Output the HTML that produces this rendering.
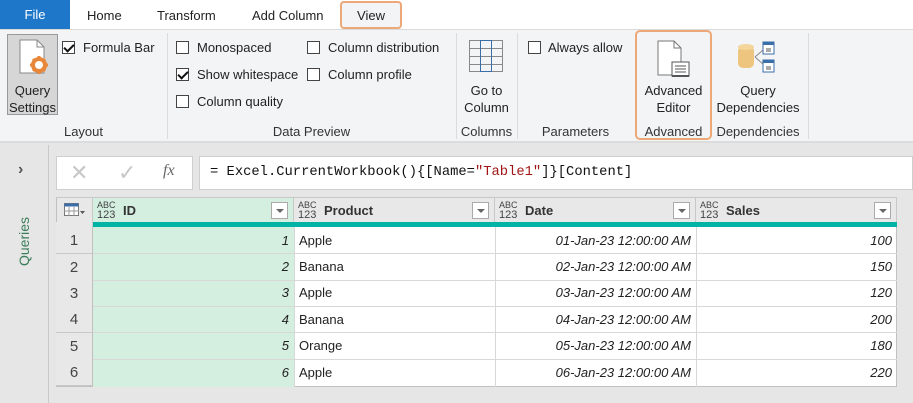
<!DOCTYPE html>
<html><head><meta charset="utf-8"><style>
*{box-sizing:border-box;margin:0;padding:0}
body{width:913px;height:403px;overflow:hidden;background:#e6e6e6;font-family:"Liberation Sans",sans-serif;font-size:13px;color:#222;position:relative}
.a{position:absolute;white-space:nowrap}
.cb{position:absolute;width:13px;height:13px;border:1px solid #444;background:#fff}
.ck:after{content:"";position:absolute;left:3px;top:0px;width:4px;height:8px;border:solid #111;border-width:0 2px 2px 0;transform:rotate(45deg)}
.sep{position:absolute;top:33px;width:1px;height:106px;background:#dcdcdc}
.lbl{position:absolute;top:124px;text-align:center;color:#333}
.hd{position:absolute;top:197px;height:25px;background:#e8e8e8;border-right:1px solid #c8c8c8;border-top:1px solid #c8c8c8}
.abc{position:absolute;left:4px;top:3px;font-size:9px;line-height:9px;color:#444}
.abc b{font-size:11px;font-weight:normal;display:block;line-height:11px}
.hn{position:absolute;left:30px;top:5px;font-weight:bold;font-size:13px;color:#333}
.dd{position:absolute;right:5px;top:4px;width:17px;height:17px;border:1px solid #aaa;background:#fff}
.dd:after{content:"";position:absolute;left:4px;top:6px;border:4px solid transparent;border-top:4px solid #666}
.rn{position:absolute;left:56px;width:37px;height:27px;background:#e8e8e8;border-right:1px solid #c0c0c0;border-bottom:1px solid #c8c8c8;text-align:center;line-height:27px;font-size:15px;color:#444}
.rl{position:absolute;left:93px;width:804px;height:1px;background:#d8d8d8}
.c{position:absolute;line-height:26px;font-size:13px}
.i{font-style:italic;text-align:right}
.vl{position:absolute;top:227px;width:1px;height:160px;background:#d8d8d8}
</style></head><body>
<div class="a" style="left:0;top:0;width:913px;height:30px;background:#fff;border-bottom:1px solid #dadada"></div>
<div class="a" style="left:0;top:0;width:70px;height:29px;background:#1f77c9;color:#fff;text-align:center;line-height:30px">File</div>
<div class="a" style="left:87px;top:8px">Home</div>
<div class="a" style="left:157px;top:8px">Transform</div>
<div class="a" style="left:252px;top:8px">Add Column</div>
<div class="a" style="left:340px;top:1px;width:62px;height:28px;border:2px solid #eda877;border-radius:4px;background:#f3f4f6;text-align:center;line-height:25px">View</div>
<div class="a" style="left:0;top:30px;width:913px;height:113px;background:#f3f4f6;border-bottom:2px solid #dcdcdc"></div>
<div class="a" style="left:7px;top:34px;width:51px;height:81px;background:#d6d6d6;border:1px solid #999"></div>
<svg class="a" style="left:18px;top:38px" width="34" height="40"><path d="M2 2h17l7 7v26H2z" fill="#fff" stroke="#888"/><path d="M19 2v7h7" fill="none" stroke="#888"/><circle cx="21" cy="27" r="6" fill="none" stroke="#e8873a" stroke-width="4"/><g stroke="#e8873a" stroke-width="3"><path d="M21 18v3M21 33v3M12 27h3M27 27h3M15 21l2 2M25 31l2 2M27 21l-2 2M15 33l2-2"/></g></svg>
<div class="a" style="left:9px;top:82px;width:47px;text-align:center;line-height:17px">Query<br>Settings</div>
<div class="cb ck" style="left:62px;top:41px"></div><div class="a" style="left:83px;top:40px">Formula Bar</div>
<div class="lbl" style="left:0;width:167px">Layout</div>
<div class="sep" style="left:167px"></div>
<div class="cb" style="left:176px;top:41px"></div><div class="a" style="left:197px;top:40px">Monospaced</div>
<div class="cb ck" style="left:176px;top:68px"></div><div class="a" style="left:197px;top:67px">Show whitespace</div>
<div class="cb" style="left:176px;top:95px"></div><div class="a" style="left:197px;top:94px">Column quality</div>
<div class="cb" style="left:307px;top:41px"></div><div class="a" style="left:328px;top:40px">Column distribution</div>
<div class="cb" style="left:307px;top:68px"></div><div class="a" style="left:328px;top:67px">Column profile</div>
<div class="lbl" style="left:167px;width:289px">Data Preview</div>
<div class="sep" style="left:456px"></div>
<svg class="a" style="left:469px;top:40px" width="35" height="33"><g fill="none" stroke="#888"><rect x="0.5" y="0.5" width="33" height="31"/><path d="M11.5 0v32M22.5 0v32M0 8.5h34M0 16.5h34M0 24.5h34"/></g><path d="M11.5 0.5h11v31h-11z" fill="none" stroke="#3a6ea8"/></svg>
<div class="a" style="left:456px;top:82px;width:61px;text-align:center;line-height:17px">Go to<br>Column</div>
<div class="lbl" style="left:456px;width:61px">Columns</div>
<div class="sep" style="left:517px"></div>
<div class="cb" style="left:528px;top:41px"></div><div class="a" style="left:548px;top:40px">Always allow</div>
<div class="lbl" style="left:517px;width:117px">Parameters</div>
<div class="a" style="left:635px;top:30px;width:77px;height:110px;border:2px solid #eda877;border-radius:5px"></div>
<svg class="a" style="left:656px;top:39px" width="36" height="40"><path d="M2 2h16l7 7v27H2z" fill="#fff" stroke="#777"/><path d="M18 2v7h7" fill="none" stroke="#777"/><rect x="16" y="23" width="17" height="14" fill="#fff" stroke="#555"/><path d="M19 27h11M19 30h11M19 33h11" stroke="#555"/><path d="M16 37h17" stroke="#555" stroke-width="2"/></svg>
<div class="a" style="left:635px;top:82px;width:77px;text-align:center;line-height:17px">Advanced<br>Editor</div>
<div class="lbl" style="left:635px;width:77px">Advanced</div>
<svg class="a" style="left:738px;top:41px" width="40" height="32"><rect x="0" y="5" width="16" height="22" rx="5" fill="#eec57f"/><ellipse cx="8" cy="6" rx="8" ry="3" fill="#f4d69c"/><path d="M17 16l8-7M17 16l8 7" stroke="#888" fill="none"/><rect x="25" y="1" width="11" height="12" fill="#fff" stroke="#3a6ea8"/><rect x="25" y="1" width="11" height="3" fill="#3a6ea8"/><rect x="25" y="19" width="11" height="12" fill="#fff" stroke="#3a6ea8"/><rect x="25" y="19" width="11" height="3" fill="#3a6ea8"/><path d="M28 8h5M28 10h5M28 26h5M28 28h5" stroke="#555"/></svg>
<div class="a" style="left:712px;top:82px;width:92px;text-align:center;line-height:17px">Query<br>Dependencies</div>
<div class="lbl" style="left:712px;width:92px">Dependencies</div>
<div class="sep" style="left:808px"></div>
<div class="a" style="left:0;top:145px;width:49px;height:258px;background:#e6e6e6;border-right:1px solid #c8c8c8"></div>
<div class="a" style="left:18px;top:161px;font-size:16px;font-weight:bold;color:#555">&#8250;</div>
<div class="a" style="left:16px;top:266px;transform:rotate(-90deg);transform-origin:0 0;color:#3a7d5a;font-size:14px">Queries</div>
<div class="a" style="left:56px;top:156px;width:137px;height:34px;background:#fff;border:1px solid #cfcfcf"></div>
<div class="a" style="left:70px;top:160px;font-size:22px;color:#c8c8c8">&#10005;</div>
<div class="a" style="left:118px;top:160px;font-size:22px;color:#c8c8c8">&#10003;</div>
<div class="a" style="left:163px;top:162px;font-family:'Liberation Serif',serif;font-style:italic;font-size:16px;color:#666">fx</div>
<div class="a" style="left:199px;top:156px;width:714px;height:34px;background:#fff;border:1px solid #cfcfcf"></div>
<div class="a" style="left:210px;top:165px;font-family:'Liberation Mono',monospace;font-size:13.8px;color:#111">= Excel.CurrentWorkbook(){[Name=<span style="color:#a31515">"Table1"</span>]}[Content]</div>
<div class="a" style="left:56px;top:197px;width:841px;height:190px;border:1px solid #c0c0c0;background:#fff"></div>
<div class="hd" style="left:56px;width:37px;border-left:1px solid #c0c0c0"><svg style="position:absolute;left:7px;top:5px" width="22" height="14"><rect x="0.5" y="0.5" width="14" height="12" fill="#fff" stroke="#777"/><rect x="0.5" y="0.5" width="14" height="3" fill="#3a6ea8"/><path d="M5 4v9M10 4v9M0 8h15" stroke="#999"/><path d="M16 8l2.5 3 2.5-3z" fill="#555"/></svg></div>
<div class="hd" style="left:93px;width:201px;background:#d4eee0"><div class="abc">ABC<b>123</b></div><div class="hn">ID</div><div class="dd"></div></div>
<div class="hd" style="left:294px;width:201px"><div class="abc">ABC<b>123</b></div><div class="hn">Product</div><div class="dd"></div></div>
<div class="hd" style="left:495px;width:201px"><div class="abc">ABC<b>123</b></div><div class="hn">Date</div><div class="dd"></div></div>
<div class="hd" style="left:696px;width:201px"><div class="abc">ABC<b>123</b></div><div class="hn">Sales</div><div class="dd"></div></div>
<div class="a" style="left:56px;top:222px;width:37px;height:5px;background:#e8e8e8;border-right:1px solid #c8c8c8"></div>
<div class="a" style="left:93px;top:222px;width:804px;height:5px;background:#00b3a4"></div>
<div class="a" style="left:93px;top:227px;width:201px;height:160px;background:#d4eee0"></div>
<div class="vl" style="left:294px"></div><div class="vl" style="left:495px"></div><div class="vl" style="left:696px"></div>
<div class="rn" style="top:227px">1</div><div class="rl" style="top:253px"></div>
<div class="rn" style="top:254px">2</div><div class="rl" style="top:280px"></div>
<div class="rn" style="top:280px">3</div><div class="rl" style="top:306px"></div>
<div class="rn" style="top:306px">4</div><div class="rl" style="top:332px"></div>
<div class="rn" style="top:333px">5</div><div class="rl" style="top:359px"></div>
<div class="rn" style="top:359px">6</div>
<div class="c i" style="left:93px;width:196px;top:228px">1</div><div class="c" style="left:299px;top:228px">Apple</div><div class="c i" style="left:495px;width:196px;top:228px">01-Jan-23 12:00:00 AM</div><div class="c i" style="left:696px;width:196px;top:228px">100</div>
<div class="c i" style="left:93px;width:196px;top:254px">2</div><div class="c" style="left:299px;top:254px">Banana</div><div class="c i" style="left:495px;width:196px;top:254px">02-Jan-23 12:00:00 AM</div><div class="c i" style="left:696px;width:196px;top:254px">150</div>
<div class="c i" style="left:93px;width:196px;top:280px">3</div><div class="c" style="left:299px;top:280px">Apple</div><div class="c i" style="left:495px;width:196px;top:280px">03-Jan-23 12:00:00 AM</div><div class="c i" style="left:696px;width:196px;top:280px">120</div>
<div class="c i" style="left:93px;width:196px;top:307px">4</div><div class="c" style="left:299px;top:307px">Banana</div><div class="c i" style="left:495px;width:196px;top:307px">04-Jan-23 12:00:00 AM</div><div class="c i" style="left:696px;width:196px;top:307px">200</div>
<div class="c i" style="left:93px;width:196px;top:333px">5</div><div class="c" style="left:299px;top:333px">Orange</div><div class="c i" style="left:495px;width:196px;top:333px">05-Jan-23 12:00:00 AM</div><div class="c i" style="left:696px;width:196px;top:333px">180</div>
<div class="c i" style="left:93px;width:196px;top:360px">6</div><div class="c" style="left:299px;top:360px">Apple</div><div class="c i" style="left:495px;width:196px;top:360px">06-Jan-23 12:00:00 AM</div><div class="c i" style="left:696px;width:196px;top:360px">220</div>
</body></html>
